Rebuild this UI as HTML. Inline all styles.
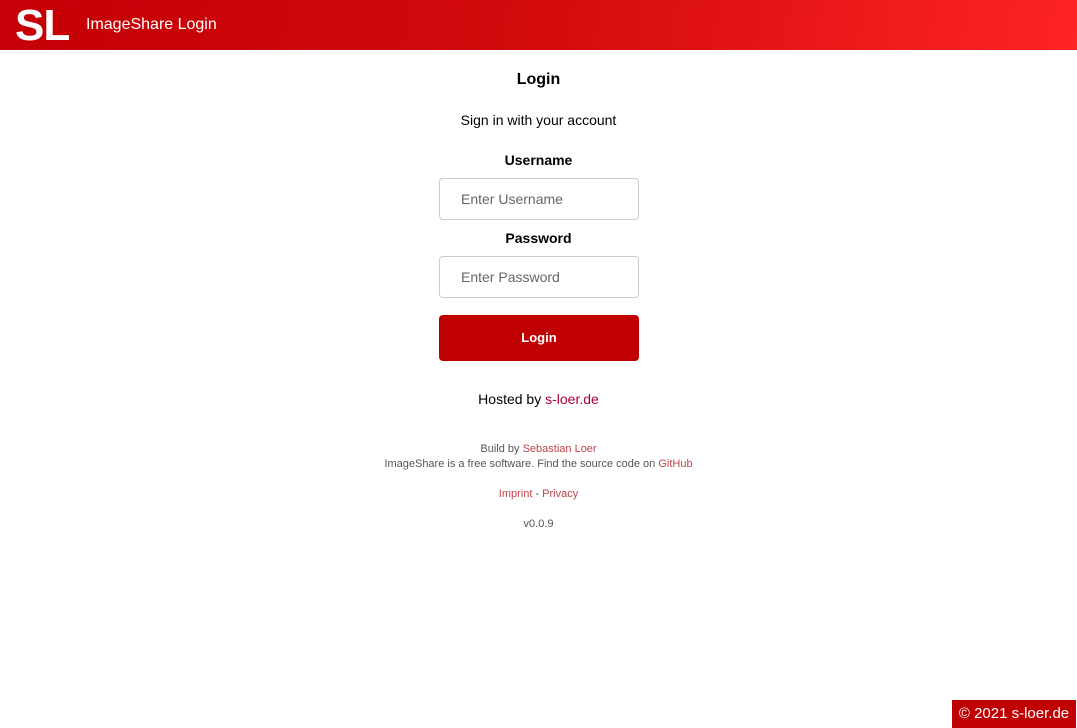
<!DOCTYPE html>
<html><head><meta charset="utf-8"><style>
body{margin:0;width:1077px;height:728px;position:relative;background:#fff;font-family:"Liberation Sans",sans-serif;overflow:hidden}
.hdr{position:absolute;left:0;top:0;width:1077px;height:50px;background:linear-gradient(100deg,#c40006 0%,#d20a0c 50%,#ff2426 100%)}
.logo{position:absolute;left:15px;top:3px;color:#fff;font-weight:bold;font-size:44px;letter-spacing:-1px;line-height:46px}
.title{position:absolute;left:86px;top:16px;color:#fff;font-size:16px}
.c{position:absolute;left:0;width:1077px;text-align:center}
.inp{position:absolute;left:439px;border:1px solid #ccc;border-radius:4px;box-sizing:border-box;width:200px;height:42px;color:#666;font-size:14px;padding:12px 0 0 21px}
.btn{position:absolute;left:439px;top:315px;width:200px;height:46px;background:#c00000;border-radius:4px;color:#fff;font-weight:bold;font-size:13px;text-align:center;line-height:45px}
.s{font-size:11px;color:#555}
a{color:#c0444a;text-decoration:none}
.foot{position:absolute;right:1px;bottom:0;width:124px;height:28px;background:#c00000;color:#fff;font-size:15px;line-height:28px;text-align:center}
</style></head><body>
<div class="hdr"><div class="logo">SL</div><div class="title">ImageShare Login</div></div>
<div class="c" style="top:71px;font-size:16px;font-weight:bold">Login</div>
<div class="c" style="top:112px;font-size:14px">Sign in with your account</div>
<div class="c" style="top:152px;font-size:14px;font-weight:bold">Username</div>
<div class="inp" style="top:178px">Enter Username</div>
<div class="c" style="top:230px;font-size:14px;font-weight:bold">Password</div>
<div class="inp" style="top:256px">Enter Password</div>
<div class="btn">Login</div>
<div class="c" style="top:391px;font-size:14px">Hosted by <a style="color:#b0003a">s-loer.de</a></div>
<div class="c s" style="top:443px">Build by <a>Sebastian Loer</a></div>
<div class="c s" style="top:458px">ImageShare is a free software. Find the source code on <a>GitHub</a></div>
<div class="c s" style="top:488px"><a>Imprint</a> - <a>Privacy</a></div>
<div class="c s" style="top:518px">v0.0.9</div>
<div class="foot">© 2021 s-loer.de</div>
</body></html>
